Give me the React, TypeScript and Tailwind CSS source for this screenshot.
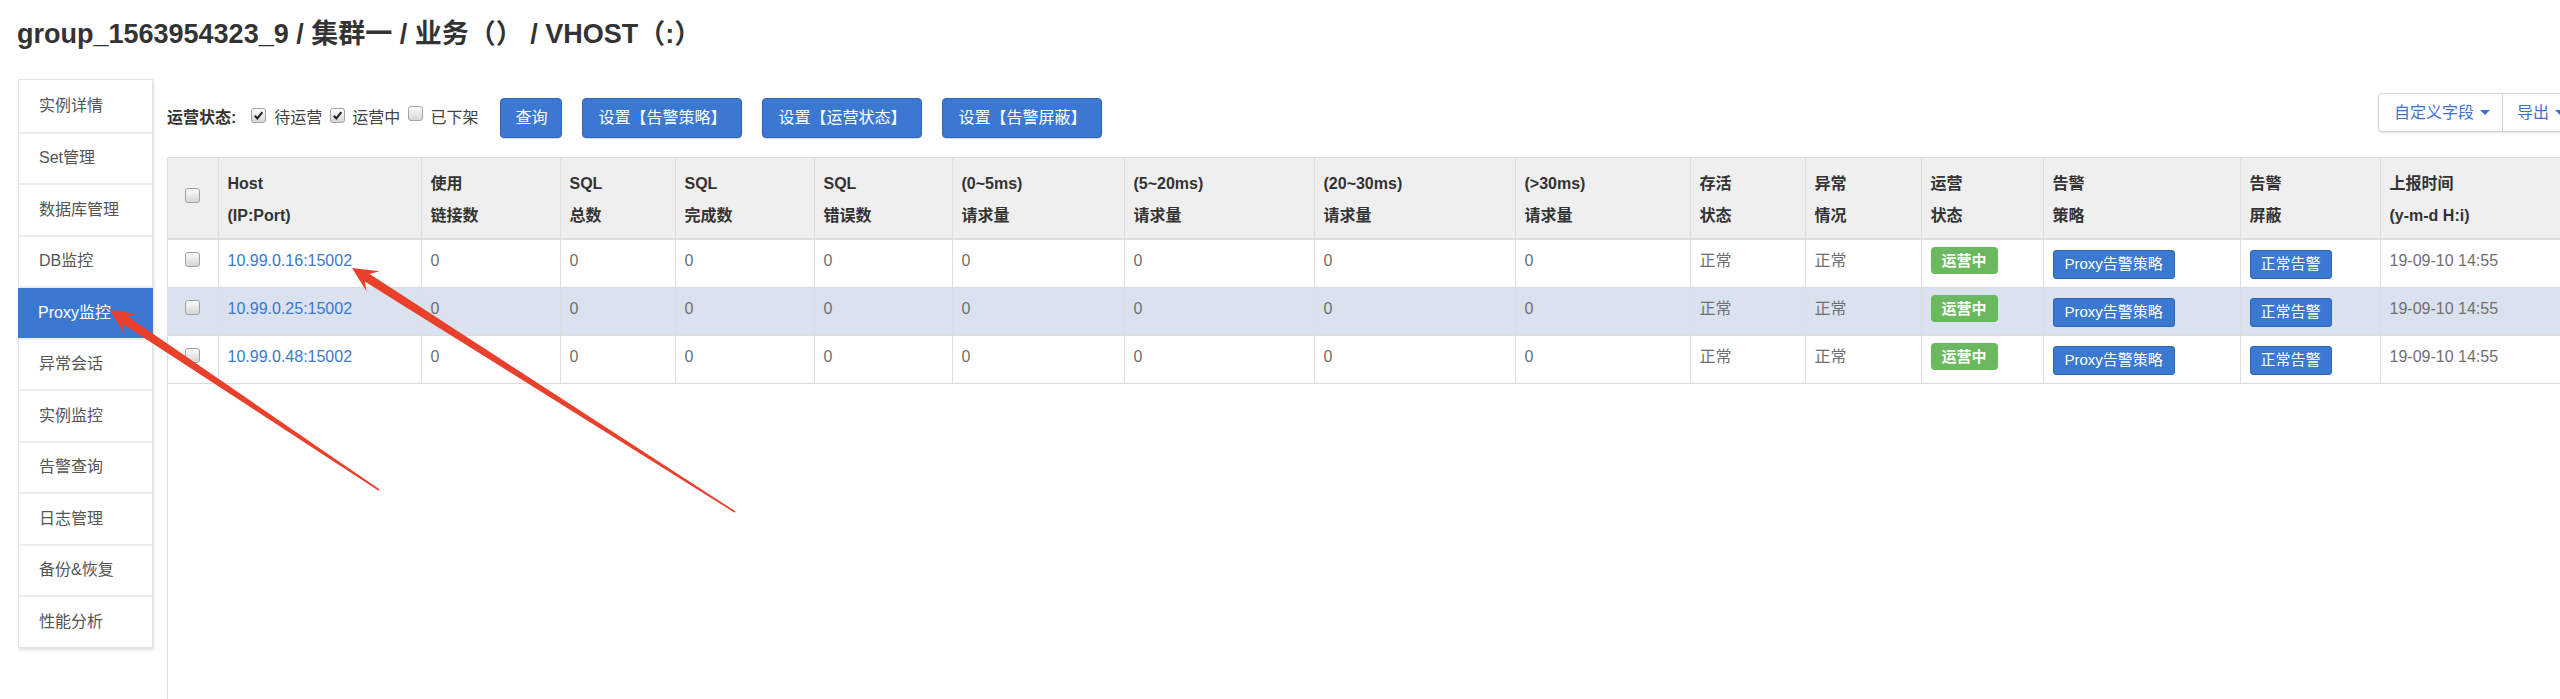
import React from 'react';

const menu = ['实例详情', 'Set管理', '数据库管理', 'DB监控', 'Proxy监控', '异常会话', '实例监控', '告警查询', '日志管理', '备份&恢复', '性能分析'];

const columns = [
  { w: 'w-[50px]', a: '', b: '' },
  { w: 'w-[203px]', a: 'Host', b: '(IP:Port)' },
  { w: 'w-[139px]', a: '使用', b: '链接数' },
  { w: 'w-[115px]', a: 'SQL', b: '总数' },
  { w: 'w-[139px]', a: 'SQL', b: '完成数' },
  { w: 'w-[138px]', a: 'SQL', b: '错误数' },
  { w: 'w-[172px]', a: '(0~5ms)', b: '请求量' },
  { w: 'w-[190px]', a: '(5~20ms)', b: '请求量' },
  { w: 'w-[201px]', a: '(20~30ms)', b: '请求量' },
  { w: 'w-[175px]', a: '(>30ms)', b: '请求量' },
  { w: 'w-[115px]', a: '存活', b: '状态' },
  { w: 'w-[116px]', a: '异常', b: '情况' },
  { w: 'w-[122px]', a: '运营', b: '状态' },
  { w: 'w-[197px]', a: '告警', b: '策略' },
  { w: 'w-[140px]', a: '告警', b: '屏蔽' },
  { w: 'w-[200px]', a: '上报时间', b: '(y-m-d H:i)' },
];

const hosts = ['10.99.0.16:15002', '10.99.0.25:15002', '10.99.0.48:15002'];

const CheckBox = ({ checked = false }: { checked?: boolean }) => (
  <span className="inline-flex w-[15px] h-[15px] shrink-0 items-center justify-center rounded-[3px] border border-[#a3a3a3] bg-linear-to-b from-[#fdfdfd] to-[#d6d6d6]">
    {checked && (
      <svg viewBox="0 0 12 12" className="w-[11px] h-[11px]">
        <path d="M2 6.3 L4.7 9.2 L10.2 2.4" stroke="#1f1f1f" strokeWidth="2.1" fill="none" />
      </svg>
    )}
  </span>
);

const Caret = () => <span className="inline-block ml-[6px] border-x-[5px] border-x-transparent border-t-[5px] border-t-[#3b73d1] align-middle" />;

function arrow(tx: number, ty: number, px: number, py: number) {
  const dx = px - tx;
  const dy = py - ty;
  const len = Math.hypot(dx, dy);
  const ux = dx / len;
  const uy = dy / len;
  const nx = -uy;
  const ny = ux;
  const headLen = 25;
  const headW = 12;
  const neck = 18;
  const shaftW = 4.5;
  const bx = px - ux * neck;
  const by = py - uy * neck;
  const hx = px - ux * headLen;
  const hy = py - uy * headLen;
  const pts = [
    [tx + nx * 0.8, ty + ny * 0.8],
    [bx + nx * shaftW, by + ny * shaftW],
    [hx + nx * headW, hy + ny * headW],
    [px, py],
    [hx - nx * headW, hy - ny * headW],
    [bx - nx * shaftW, by - ny * shaftW],
    [tx - nx * 0.8, ty - ny * 0.8],
  ];
  return pts.map((p) => p.join(',')).join(' ');
}

const App: React.FC = () => {
  return (
    <div className="relative w-full h-[699px] overflow-hidden bg-white pl-[17px] font-['Liberation_Sans','Noto_Sans_CJK_SC',sans-serif] text-[#333]">
      <h1 className="pt-[19px] text-[27px] leading-[30px] font-bold text-[#333] whitespace-nowrap">
        group_1563954323_9 / 集群一 / 业务（） / VHOST（:）
      </h1>

      <div className="flex mt-[30px] h-[620px]">
        {/* sidebar */}
        <div className="ml-[1px] w-[135px] shrink-0 self-start bg-white border border-[#e3e3e3] shadow-[1px_2px_3px_rgba(0,0,0,0.13)]">
          {menu.map((m, i) => (
            <div
              key={m}
              className={
                'h-[51.5px] flex items-center px-[20px] text-[16px] whitespace-nowrap ' +
                (i > 0 ? 'border-t-2 border-[#ececec] ' : '') +
                (m === 'Proxy监控' ? 'bg-[#3a78d2] text-white -mx-px' : 'text-[#555]')
              }
            >
              {m}
            </div>
          ))}
        </div>

        {/* main */}
        <div className="ml-[14px] w-[2413px] shrink-0 flex flex-col">
          <div className="h-[78px] flex shrink-0">
            <div className="flex items-center text-[16px] whitespace-nowrap">
              <span className="font-bold text-[#333]">运营状态:</span>
              <span className="ml-[15px] mb-[4px]"><CheckBox checked /></span>
              <span className="ml-[8px] text-[#444]">待运营</span>
              <span className="ml-[8px] mb-[4px]"><CheckBox checked /></span>
              <span className="ml-[7px] text-[#444]">运营中</span>
              <span className="ml-[8px] mb-[4px]"><CheckBox /></span>
              <span className="ml-[7px] text-[#444]">已下架</span>
              <button className="ml-[22px] h-[40px] px-[14px] rounded-[4px] border border-[#2f66b3] bg-[#3a78d2] text-white text-[16px] shadow-[0_1px_1px_rgba(0,0,0,0.15)]">查询</button>
              <button className="ml-[20px] h-[40px] px-[15px] rounded-[4px] border border-[#2f66b3] bg-[#3a78d2] text-white text-[16px] shadow-[0_1px_1px_rgba(0,0,0,0.15)]">设置【告警策略】</button>
              <button className="ml-[20px] h-[40px] px-[15px] rounded-[4px] border border-[#2f66b3] bg-[#3a78d2] text-white text-[16px] shadow-[0_1px_1px_rgba(0,0,0,0.15)]">设置【运营状态】</button>
              <button className="ml-[20px] h-[40px] px-[15px] rounded-[4px] border border-[#2f66b3] bg-[#3a78d2] text-white text-[16px] shadow-[0_1px_1px_rgba(0,0,0,0.15)]">设置【告警屏蔽】</button>
            </div>
            <div className="ml-auto mt-[14px] h-[39px] flex rounded-[4px] border border-[#d4d4d4] bg-white shadow-[0_1px_2px_rgba(0,0,0,0.12)] text-[16px] text-[#3b73d1] whitespace-nowrap">
              <span className="flex items-center pl-[15px] pr-[12px]">自定义字段<Caret /></span>
              <span className="flex items-center pl-[14px] pr-[14px] border-l border-[#d4d4d4]">导出<Caret /></span>
            </div>
          </div>

          <div className="flex-1 border-l border-[#ddd]">
            <table className="table-fixed border-collapse w-[2412px] text-[16px]">
              <colgroup>
                {columns.map((c, i) => (
                  <col key={i} className={c.w} />
                ))}
              </colgroup>
              <thead>
                <tr className="bg-[#efefef]">
                  {columns.map((c, i) =>
                    i === 0 ? (
                      <th key={i} className="border-t border-b-2 border-[#ddd] align-middle text-center">
                        <span className="inline-flex mt-[-6px]"><CheckBox /></span>
                      </th>
                    ) : (
                      <th
                        key={i}
                        className="border-t border-l border-b-2 border-[#ddd] align-top text-left font-bold text-[#333] px-[9px] pt-[10px] pb-[6px] leading-[32px] whitespace-nowrap"
                      >
                        <div>{c.a}</div>
                        <div>{c.b}</div>
                      </th>
                    )
                  )}
                </tr>
              </thead>
              <tbody>
                {hosts.map((h, r) => (
                  <tr key={h} className={'h-[48px] ' + (r === 1 ? 'bg-[#d9e2ee]' : 'bg-white')}>
                    <td className="border-b border-[#ddd] align-top text-center pt-[10px]">
                      <span className="inline-flex"><CheckBox /></span>
                    </td>
                    <td className="border-b border-l border-[#ddd] align-top px-[9px] pt-[10px] leading-[22px] text-[#3a78d2] whitespace-nowrap">{h}</td>
                    {Array.from({ length: 8 }).map((_, k) => (
                      <td key={k} className="border-b border-l border-[#ddd] align-top px-[9px] pt-[10px] leading-[22px] text-[#707070]">0</td>
                    ))}
                    <td className="border-b border-l border-[#ddd] align-top px-[9px] pt-[10px] leading-[22px] text-[#707070]">正常</td>
                    <td className="border-b border-l border-[#ddd] align-top px-[9px] pt-[10px] leading-[22px] text-[#707070]">正常</td>
                    <td className="border-b border-l border-[#ddd] align-top px-[9px] pt-[7px]">
                      <span className="inline-block h-[27px] px-[11px] rounded-[4px] bg-[#6ab95e] text-white font-bold text-[15px] leading-[27px]">运营中</span>
                    </td>
                    <td className="border-b border-l border-[#ddd] align-top px-[9px] pt-[10px]">
                      <span className="inline-flex items-center h-[29px] px-[11px] rounded-[3px] border border-[#2f66b3] bg-[#3a78d2] text-white text-[15px] whitespace-nowrap">Proxy告警策略</span>
                    </td>
                    <td className="border-b border-l border-[#ddd] align-top px-[9px] pt-[10px]">
                      <span className="inline-flex items-center h-[29px] px-[10px] rounded-[3px] border border-[#2f66b3] bg-[#3a78d2] text-white text-[15px] whitespace-nowrap">正常告警</span>
                    </td>
                    <td className="border-b border-l border-[#ddd] align-top px-[9px] pt-[10px] leading-[22px] text-[#707070] whitespace-nowrap">19-09-10 14:55</td>
                  </tr>
                ))}
              </tbody>
            </table>
          </div>
        </div>
      </div>

      {/* red annotation arrows */}
      <svg className="absolute top-0 left-0 w-[2560px] h-[699px] pointer-events-none" viewBox="0 0 2560 699">
        <polygon points={arrow(379, 490, 110, 310)} fill="#e8402b" />
        <polygon points={arrow(735, 512, 352, 268)} fill="#e8402b" />
      </svg>
    </div>
  );
};

export default App;
